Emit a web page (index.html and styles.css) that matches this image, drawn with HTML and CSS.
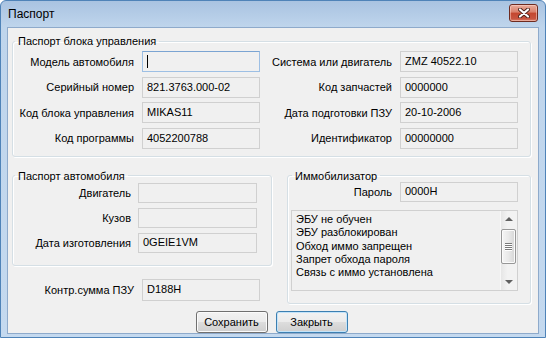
FILE: index.html
```html
<!DOCTYPE html>
<html lang="ru">

<head>
    <meta charset="UTF-8">
    <title>Паспорт</title>
    <link rel="stylesheet" href="styles.css">
</head>

<body>
    <div class="window">
        <div class="titlebar">
            <span class="title">Паспорт</span>
            <span class="close-btn">
                <svg width="12" height="10" viewBox="0 0 12 10">
                    <path d="M2 1.5 L10 8.5 M10 1.5 L2 8.5" stroke="#4a2119" stroke-width="4" stroke-linecap="round" />
                    <path d="M2 1.5 L10 8.5 M10 1.5 L2 8.5" stroke="#ffffff" stroke-width="2.2" stroke-linecap="round" />
                </svg>
            </span>
        </div>

        <div class="client">
            <fieldset class="group ecu">
                <legend>Паспорт блока управления</legend>
                <div class="ecu-grid">
                    <span class="lbl">Модель автомобиля</span>
                    <div class="field focused"><span class="caret"></span></div>
                    <span class="lbl">Система или двигатель</span>
                    <div class="field">ZMZ 40522.10</div>

                    <span class="lbl">Серийный номер</span>
                    <div class="field">821.3763.000-02</div>
                    <span class="lbl">Код запчастей</span>
                    <div class="field">0000000</div>

                    <span class="lbl">Код блока управления</span>
                    <div class="field">MIKAS11</div>
                    <span class="lbl">Дата подготовки ПЗУ</span>
                    <div class="field">20-10-2006</div>

                    <span class="lbl">Код программы</span>
                    <div class="field">4052200788</div>
                    <span class="lbl">Идентификатор</span>
                    <div class="field">00000000</div>
                </div>
            </fieldset>

            <div class="lower">
                <div class="left-col">
                    <fieldset class="group car">
                        <legend>Паспорт автомобиля</legend>
                        <div class="car-grid">
                            <span class="lbl">Двигатель</span>
                            <div class="field"></div>
                            <span class="lbl">Кузов</span>
                            <div class="field"></div>
                            <span class="lbl">Дата изготовления</span>
                            <div class="field">0GEIE1VM</div>
                        </div>
                    </fieldset>
                    <div class="checksum">
                        <span class="lbl">Контр.сумма ПЗУ</span>
                        <div class="field">D188H</div>
                    </div>
                </div>

                <fieldset class="group immo">
                    <legend>Иммобилизатор</legend>
                    <div class="pass-row">
                        <span class="lbl">Пароль</span>
                        <div class="field">0000H</div>
                    </div>
                    <div class="listbox">
                        <ul>
                            <li>ЭБУ не обучен</li>
                            <li>ЭБУ разблокирован</li>
                            <li>Обход иммо запрещен</li>
                            <li>Запрет обхода пароля</li>
                            <li>Связь с иммо установлена</li>
                        </ul>
                        <div class="scrollbar">
                            <div class="arrow up"></div>
                            <div class="track">
                                <div class="thumb"><span></span><span></span><span></span><span></span></div>
                            </div>
                            <div class="arrow down"></div>
                        </div>
                    </div>
                </fieldset>
            </div>

            <div class="buttons">
                <button class="btn">Сохранить</button>
                <button class="btn default">Закрыть</button>
            </div>
        </div>
    </div>
</body>

</html>
```

FILE: styles.css
```css
* {
    box-sizing: border-box;
    margin: 0;
    padding: 0;
}

body {
    width: 546px;
    height: 338px;
    overflow: hidden;
    font-family: "Liberation Sans", Arial, sans-serif;
    font-size: 11px;
    color: #000;
}

.window {
    width: 546px;
    height: 338px;
    border: 1px solid #4f83b8;
    border-radius: 6px 6px 0 0;
    background: linear-gradient(#a9c3e1, #bfd5ec 26px, #c4d9ef);
    padding: 0 6px 3px;
    display: flex;
    flex-direction: column;
}

.titlebar {
    height: 26px;
    flex: none;
    display: flex;
    align-items: center;
    justify-content: space-between;
}

.title {
    margin-left: 1px;
    font-size: 12px;
    color: #000;
}

.close-btn {
    width: 29px;
    height: 18px;
    margin-top: -3px;
    margin-right: 1px;
    border: 1px solid #6e2b20;
    border-radius: 3px;
    background: linear-gradient(#e9ab9b, #d9806b 45%, #c4472f 50%, #c85540 85%, #d9806b);
    box-shadow: inset 0 0 0 1px rgba(255, 220, 210, 0.5);
    display: flex;
    align-items: center;
    justify-content: center;
}

.client {
    flex: 1;
    background: #f0f0f0;
    border: 1px solid #8eaacb;
    padding: 6px 7px 0 4px;
}

/* group boxes */
.group {
    border: 1px solid #d5dfe5;
    border-radius: 3px;
    box-shadow: inset 1px 1px 0 #fff, 1px 1px 0 #fff;
    min-width: 0;
}

.group legend {
    margin-left: 2px;
    padding: 0 3px;
    line-height: 14px;
}

.lbl {
    text-align: right;
    white-space: nowrap;
    padding-right: 8px;
    align-self: center;
}

.field {
    height: 21px;
    border: 1px solid #d0d0d0;
    background: #f0f0f0;
    padding-left: 4px;
    line-height: 18px;
    white-space: nowrap;
}

.field.focused {
    border-color: #9dbfe4;
    border-top-color: #7ba4d2;
    position: relative;
}

.caret {
    position: absolute;
    left: 4px;
    top: 3px;
    width: 1px;
    height: 13px;
    background: #000;
}

.ecu {
    padding: 3px 12px 7px 0;
}

.ecu-grid {
    display: grid;
    grid-template-columns: 129px 118px 140px 118px;
    row-gap: 4.67px;
}

.lower {
    display: grid;
    grid-template-columns: 260px 244px;
    column-gap: 15px;
    margin-top: 12px;
}

.car {
    padding: 0 14px 12px 0;
}

.car-grid {
    display: grid;
    grid-template-columns: 125px 119px;
    row-gap: 5px;
}

.car-grid .field {
    height: 20px;
    line-height: 17px;
}

.car-grid .lbl {
    padding-right: 7px;
}

.checksum {
    display: grid;
    grid-template-columns: 130px 118px;
    margin-top: 13px;
}

.checksum .field {
    height: 22px;
    line-height: 18px;
}

.immo {
    padding: 0 12px 12px 0;
}

.immo legend {
    margin-left: 4px;
}

.pass-row {
    display: grid;
    grid-template-columns: 112px 118px;
    margin-top: -1px;
}

.pass-row .field {
    height: 20px;
    line-height: 17px;
}

/* list with scrollbar */
.listbox {
    margin: 8px 0 0 3px;
    height: 81px;
    border: 1px solid #d0d0d0;
    background: #f0f0f0;
    display: flex;
}

.listbox ul {
    flex: 1;
    list-style: none;
    padding: 2px 0 0 4px;
}

.listbox li {
    line-height: 13.3px;
    white-space: nowrap;
}

.scrollbar {
    width: 17px;
    display: flex;
    flex-direction: column;
    background: linear-gradient(90deg, #e6e6e6, #f2f2f2 40%, #f2f2f2);
    border-left: 1px solid #f7f7f7;
}

.arrow {
    height: 17px;
    position: relative;
}

.arrow::after {
    content: "";
    position: absolute;
    left: 4px;
    top: 7px;
    border-left: 4px solid transparent;
    border-right: 4px solid transparent;
}

.arrow.up::after {
    top: 6px;
    border-bottom: 4px solid #606060;
}

.arrow.down::after {
    top: 7px;
    border-top: 4px solid #606060;
}

.track {
    flex: 1;
    padding: 1px 0 0 0;
}

.thumb {
    height: 35px;
    width: 15px;
    border: 1px solid #979797;
    border-radius: 2px;
    background: linear-gradient(90deg, #f5f5f5, #e9e9e9 50%, #d6d6d6);
    box-shadow: inset 0 0 0 1px #fbfbfb;
    display: flex;
    flex-direction: column;
    align-items: center;
    justify-content: center;
    gap: 1px;
}

.thumb span {
    width: 7px;
    height: 1px;
    background: #7a7a7a;
    box-shadow: 0 1px 0 #fff;
}

/* buttons */
.buttons {
    display: flex;
    justify-content: center;
    gap: 8px;
    margin-top: 7px;
}

.btn {
    width: 72px;
    height: 22px;
    border: 1px solid #707070;
    border-radius: 3px;
    background: linear-gradient(#f2f2f2, #ebebeb 50%, #dddddd 50%, #cfcfcf);
    box-shadow: inset 0 0 0 1px #fbfbfb;
    font-family: inherit;
    font-size: 11px;
    color: #000;
}

.btn.default {
    border-color: #3c7fb1;
    box-shadow: inset 0 0 0 1px #c4e4fa;
}
```
